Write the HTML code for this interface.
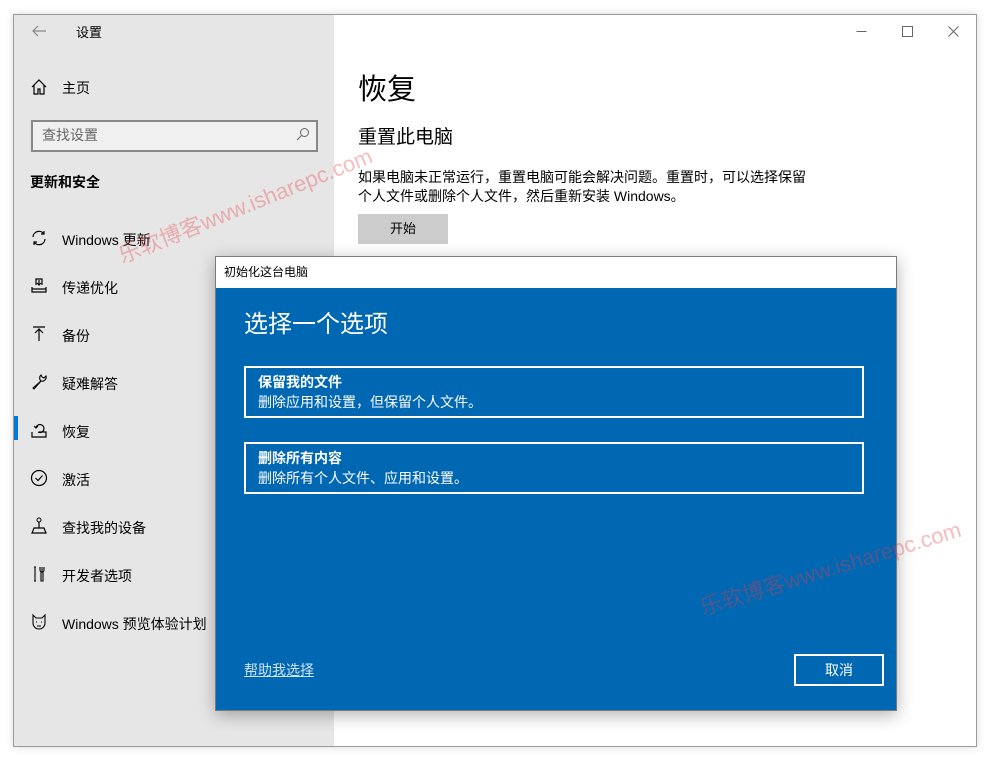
<!DOCTYPE html>
<html><head><meta charset="utf-8"><style>
*{margin:0;padding:0;box-sizing:border-box}
body{width:995px;height:759px;background:#fff;position:relative;overflow:hidden;font-family:"Liberation Sans","Noto Sans CJK SC",sans-serif;color:#000}
.win{position:absolute;left:13px;top:14px;width:964px;height:733px;border:1px solid #9a9a9a;background:#fff;box-shadow:0 0 8px rgba(0,0,0,.15)}
.side{position:absolute;left:0;top:0;width:320px;height:731px;background:#e6e6e6}
.t{position:absolute;white-space:nowrap}
.ico{position:absolute;left:16px;width:18px;height:18px}
.item{font-size:14px}
.dlg{position:absolute;left:215px;top:256px;width:682px;height:455px;border:1px solid #7a7a7a;box-shadow:0 4px 16px rgba(0,0,0,.3);background:#0067b3}
.dt{height:31px;background:#fff;font-size:12px;padding:6px 0 0 8px}
.opt{position:absolute;left:28px;width:620px;height:52px;border:2px solid #fff;color:#fff;padding:4px 0 0 12px;font-size:14px;line-height:20px}
.wm{position:absolute;color:rgba(235,60,70,.35);font-size:22px;white-space:nowrap;transform-origin:left bottom}
</style></head><body>
<div class="win">
 <div class="side">
  <svg class="ico" style="left:17px;top:9px;width:16px;height:14px" viewBox="0 0 16 14"><path d="M15 7H2M7 2L2 7l5 5" fill="none" stroke="#888" stroke-width="1.2"/></svg>
  <div class="t" style="left:62px;top:7px;font-size:13px">设置</div>
  <svg class="ico" style="top:63px" viewBox="0 0 18 18"><path d="M2 9L9 2l7 7M4 7v9h4v-5h2v5h4V7" fill="none" stroke="#000" stroke-width="1.2"/></svg>
  <div class="t item" style="left:48px;top:63px">主页</div>
  <div style="position:absolute;left:17px;top:105px;width:287px;height:32px;border:2px solid #888;background:#f0f0f0"></div>
  <div class="t" style="left:28px;top:110px;font-size:14px;color:#666">查找设置</div>
  <svg class="ico" style="left:282px;top:112px;width:14px;height:14px" viewBox="0 0 14 14"><circle cx="8.5" cy="5.5" r="4" fill="none" stroke="#666"/><path d="M5.5 8.5L1 13" stroke="#666"/></svg>
  <div class="t" style="left:16px;top:157px;font-size:14px;font-weight:bold">更新和安全</div>
  <svg class="ico" style="top:214px" viewBox="0 0 18 18"><path d="M3 8a6 6 0 0 1 11-3M15 10a6 6 0 0 1-11 3M14 2v3h-3M4 16v-3h3" fill="none" stroke="#000" stroke-width="1.2"/></svg>
  <div class="t item" style="left:48px;top:215px">Windows 更新</div>
  <svg class="ico" style="top:262px" viewBox="0 0 18 18"><path d="M2 10v5h14v-5M2 12h14M6 8V2h6v6M9 3v5M7 6l2 2 2-2" fill="none" stroke="#000" stroke-width="1.2"/></svg>
  <div class="t item" style="left:48px;top:263px">传递优化</div>
  <svg class="ico" style="top:310px" viewBox="0 0 18 18"><path d="M3 2h12M9 4v12M5 8l4-4 4 4" fill="none" stroke="#000" stroke-width="1.2"/></svg>
  <div class="t item" style="left:48px;top:311px">备份</div>
  <svg class="ico" style="top:358px" viewBox="0 0 18 18"><path d="M11 2a4 4 0 0 0 0 6L3 15l1 1 7-8a4 4 0 0 0 5-5l-2 2-2-1-1-2z" fill="none" stroke="#000" stroke-width="1.1"/></svg>
  <div class="t item" style="left:48px;top:359px">疑难解答</div>
  <div style="position:absolute;left:0;top:401px;width:4px;height:24px;background:#0078d7"></div>
  <svg class="ico" style="top:406px" viewBox="0 0 18 18"><path d="M2 11v5h14v-5H9M6 7a4 4 0 1 1 2 4M4 5l2 2 2-2" fill="none" stroke="#000" stroke-width="1.2"/></svg>
  <div class="t item" style="left:48px;top:407px">恢复</div>
  <svg class="ico" style="top:454px" viewBox="0 0 18 18"><circle cx="9" cy="9" r="7.5" fill="none" stroke="#000" stroke-width="1.2"/><path d="M5.5 9l2.5 2.5 4.5-5" fill="none" stroke="#000" stroke-width="1.2"/></svg>
  <div class="t item" style="left:48px;top:455px">激活</div>
  <svg class="ico" style="top:502px" viewBox="0 0 18 18"><circle cx="9" cy="3" r="2" fill="none" stroke="#000"/><path d="M9 5v6M2 16h14l-2-5H4z" fill="none" stroke="#000" stroke-width="1.2"/></svg>
  <div class="t item" style="left:48px;top:503px">查找我的设备</div>
  <svg class="ico" style="top:550px" viewBox="0 0 18 18"><path d="M5 2v14M4 2h2M4 16h2M12 2v5M10 2v3a2 2 0 0 0 4 0V2M11 7h2v9h-2z" fill="none" stroke="#000" stroke-width="1.1"/></svg>
  <div class="t item" style="left:48px;top:551px">开发者选项</div>
  <svg class="ico" style="top:598px" viewBox="0 0 18 18"><path d="M3 2l3 3h6l3-3v8a6 6 0 0 1-12 0zM6 9h1M11 9h1M7 13h4" fill="none" stroke="#000" stroke-width="1.1"/></svg>
  <div class="t item" style="left:48px;top:599px">Windows 预览体验计划</div>
 </div>
 <svg style="position:absolute;left:830px;top:0;width:130px;height:34px" viewBox="0 0 130 34"><path d="M12.5 16.5h10" stroke="#666"/><rect x="58.5" y="11.5" width="10" height="10" fill="none" stroke="#666"/><path d="M104.5 11.5l10 10M114.5 11.5l-10 10" stroke="#666"/></svg>
 <div class="t" style="left:344px;top:51px;font-size:29px">恢复</div>
 <div class="t" style="left:344px;top:107px;font-size:19px">重置此电脑</div>
 <div class="t" style="left:344px;top:153px;font-size:14px;line-height:19px">如果电脑未正常运行，重置电脑可能会解决问题。重置时，可以选择保留<br>个人文件或删除个人文件，然后重新安装 Windows。</div>
 <div style="position:absolute;left:344px;top:199px;width:90px;height:30px;background:#ccc;font-size:13px;text-align:center;line-height:30px">开始</div>
</div>
<div class="wm" style="left:125px;top:238px;transform:rotate(-22deg)">乐软博客www.isharepc.com</div>
<div class="dlg">
 <div class="dt">初始化这台电脑</div>
 <div class="t" style="left:28px;top:47px;font-size:24px;color:#fff">选择一个选项</div>
 <div class="opt" style="top:109px"><b>保留我的文件</b><br>删除应用和设置，但保留个人文件。</div>
 <div class="opt" style="top:185px"><b>删除所有内容</b><br>删除所有个人文件、应用和设置。</div>
 <div class="t" style="left:28px;top:403px;font-size:14px;color:#cfe3f7;text-decoration:underline">帮助我选择</div>
 <div style="position:absolute;left:578px;top:397px;width:90px;height:32px;border:2px solid #fff;color:#fff;font-size:14px;text-align:center;line-height:28px">取消</div>
</div>
<div class="wm" style="left:705px;top:590px;transform:rotate(-17deg)">乐软博客www.isharepc.com</div>
</body></html>
